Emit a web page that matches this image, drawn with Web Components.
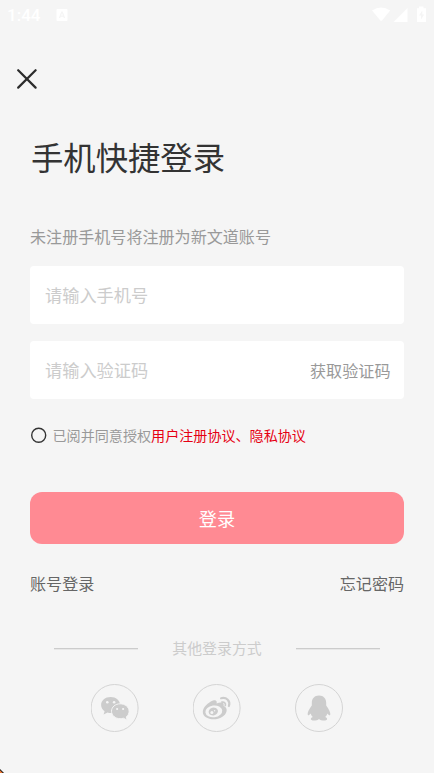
<!DOCTYPE html>
<html lang="zh-CN">
<head>
<meta charset="utf-8">
<title>手机快捷登录</title>
<style>
html,body{margin:0;height:100%;background:#f5f5f5;overflow:hidden}
body{font-family:"Noto Sans CJK SC",sans-serif;color:#333}
</style>
</head>
<body>
<login-page></login-page>
<script>
const define = (name, html) => {
  const t = document.createElement('template');
  t.innerHTML = html;
  customElements.define(name, class extends HTMLElement {
    constructor() {
      super();
      this.attachShadow({mode: 'open'}).append(t.content.cloneNode(true));
    }
  });
};

define('status-bar', `
<style>
:host{display:flex;height:30px;box-sizing:border-box;padding:0 6px 0 7px;align-items:center;color:#fff;font:500 17px/30px Roboto,sans-serif}
.t{width:49px;height:30px}
.s{flex:1}
svg{display:block;fill:#fff}
</style>
<span class="t">1:44</span>
<svg width="12" height="14" viewBox="0 0 12 14"><path fill-rule="evenodd" d="M1.500 1H10.500Q11.500 1 11.500 2V12Q11.500 13 10.500 13H1.500Q.5 13 .5 12V2Q.5 1 1.500 1ZM5.300 3.500 2.800 10H4.200L4.700 8.700H7.300L7.800 10H9.200L6.700 3.500ZM5.100 7.500 6 5 6.900 7.500Z"/></svg>
<span class="s"></span>
<svg width="56" height="18" viewBox="0 0 56 18"><path d="M0 4.400Q9 -1.400 18.200 4.400L10.300 14.200Q9.200 15.500 8.100 14.200ZM21.500 16 35.500 2V16Z"/><path fill-rule="evenodd" d="M47 .5H51.500V2.200H54V16H45V2.200H47ZM50.300 4.500 47 9.500H49V13.500L52.200 8.500H50.300Z"/></svg>`);

define('close-button', `
<style>:host{display:block;padding:39px 0 0 17px;height:60px;box-sizing:border-box}svg{display:block}</style>
<svg width="20" height="20" viewBox="0 0 20 20"><path d="M1.200 1.200 18.600 18.600M18.600 1.200 1.200 18.600" fill="none" stroke="#2c2c2c" stroke-width="2.200" stroke-linecap="round"/></svg>`);

define('text-field', `
<style>
:host{display:flex;justify-content:space-between;align-items:center;height:58px;box-sizing:border-box;padding:0 13.500px 0 15px;border-radius:4px;background:#fff;color:#ccc;font-size:17.200px;line-height:58px}
::slotted([slot=action]){font-size:16.100px;color:#999;line-height:58px;height:58px}
</style><span><slot></slot></span><slot name="action"></slot>`);

define('agree-line', `
<style>
:host{display:flex;align-items:center;height:20px;font-size:14.090px;line-height:20px;color:#999;white-space:nowrap}
i{box-sizing:border-box;width:16px;height:16px;margin:0 6px 0 .5px;flex:none}
svg{display:block}
::slotted(b){font-weight:400;color:#e60012}
</style><i><svg width="16" height="16" viewBox="0 0 16 16"><circle cx="7.700" cy="8.200" r="7" fill="none" stroke="#333" stroke-width="1.400"/></svg></i><span><slot></slot></span>`);

define('primary-button', `
<style>:host{display:block;height:52px;border-radius:12px;background:#ff8a93;color:#fff;text-align:center;font-size:18.200px;line-height:52px}</style><slot></slot>`);

define('link-row', `
<style>:host{display:flex;justify-content:space-between;height:24px;font-size:16.070px;line-height:24px;color:#666}</style><slot></slot>`);

define('line-divider', `
<style>
:host{display:flex;justify-content:space-between;align-items:center;height:24px;padding:0 24px;font-size:14.900px;line-height:24px;color:#ccc}
i{width:84px;height:1px;background:#ccc;box-shadow:0 1px #e8e8e8}
</style><i></i><span><slot></slot></span><i></i>`);

define('round-icon', `
<style>:host{display:block;width:48px;height:48px}::slotted(svg){display:block}</style><slot></slot>`);

define('login-page', `
<style>
:host{display:block;width:434px;height:773px;background:#f5f5f5;position:relative;overflow:hidden}
main{padding:0 30px;display:flex;flex-direction:column}
h1{margin:42px 0 0;padding-left:1px;font-weight:400;font-size:32.350px;line-height:48px;color:#333}
p{margin:44px 0 0;font-size:16.070px;line-height:24px;height:24px;color:#999}
text-field.a{margin-top:18px}
text-field.b{margin-top:17px}
agree-line{margin-top:26px}
primary-button{margin-top:47px}
link-row{margin-top:27px}
line-divider{margin-top:41px}
.socials{display:flex;gap:54px;padding:24px 0 0 61px}
.corner{position:absolute;left:0;bottom:0;display:block}
</style>
<status-bar></status-bar>
<close-button></close-button>
<main>
<h1>手机快捷登录</h1>
<p>未注册手机号将注册为新文道账号</p>
<text-field class="a">请输入手机号</text-field>
<text-field class="b">请输入验证码<span slot="action">获取验证码</span></text-field>
<agree-line>已阅并同意授权<b>用户注册协议、隐私协议</b></agree-line>
<primary-button>登录</primary-button>
<link-row><span>账号登录</span><span>忘记密码</span></link-row>
<line-divider>其他登录方式</line-divider>
<div class="socials">
<round-icon><svg width="48" height="48" viewBox="0.400 0 48 48"><circle cx="24" cy="24" r="23.500" fill="none" stroke="#d4d4d4"/><path fill="#ccc" d="M20 13C14.700 13 10.500 16.500 10.500 21C10.500 23.600 11.900 25.800 14 27.300L13 30.500L17 28.500Q18.500 29 20 29C25.300 29 29.500 25.500 29.500 21S25.300 13 20 13Z"/><path fill="#ccc" stroke="#f5f5f5" d="M29.500 19.800C24.800 19.800 20.900 23 20.900 27.200S24.800 34.700 29.500 34.700Q31.200 34.700 32.800 34.200L36.600 36.200L35.700 33C37.500 31.500 38.500 29.500 38.500 27.200C38.500 23 34.500 19.800 29.500 19.800Z"/><g fill="#f5f5f5"><circle cx="16.700" cy="18.200" r="1.300"/><circle cx="23.500" cy="18.200" r="1.300"/><circle cx="26.500" cy="25" r="1.100"/><circle cx="32.500" cy="25" r="1.100"/></g></svg></round-icon>
<round-icon><svg width="48" height="48" viewBox="0.400 0 48 48"><circle cx="24" cy="24" r="23.500" fill="none" stroke="#d4d4d4"/><path fill="#ccc" d="M20.500 16.500C23.300 15.500 24.700 16.800 24 19.500C28 17.800 32 18.200 31 22Q34.500 23.400 34 27C33.200 32 27 35.300 21 35.300C15 35.300 10.200 32.200 10.200 28C10.200 23.500 15.500 18.200 20.500 16.500Z"/><ellipse cx="21.200" cy="27.400" rx="8.500" ry="5.900" fill="#f5f5f5" transform="rotate(-8 21.200 27.400)"/><ellipse cx="20.700" cy="27.500" rx="4.700" ry="4" fill="#ccc" transform="rotate(-15 20.700 27.500)"/><circle cx="19.300" cy="28.400" r="1.500" fill="#f5f5f5"/><circle cx="22" cy="26.700" r=".7" fill="#f5f5f5"/><g fill="none" stroke="#ccc" stroke-linecap="round"><path stroke-width="2.200" d="M28.500 14.200C34 13 38 17 36.300 22"/><path stroke-width="1.700" d="M29.300 18.200C31.700 17.700 33.400 19.300 32.700 21.500"/></g></svg></round-icon>
<round-icon><svg width="48" height="48" viewBox="0 0 48 48"><circle cx="24" cy="24" r="23.500" fill="none" stroke="#d4d4d4"/><path fill="#ccc" d="M24 11.500C19.300 11.500 16.800 14.800 16.800 19V21.500C15.500 23.500 12.700 27 12.700 30C12.700 32 14 31.500 15.700 29.500C16 31 16.800 32 17.800 33C14.800 34.200 15.300 36.500 18.700 36.500C21 36.500 23 36 24 35C25 36 27 36.500 29.300 36.500C32.700 36.500 33.200 34.200 30.200 33C31.200 32 32 31 32.300 29.500C34 31.500 35.300 32 35.300 30C35.300 27 32.500 23.500 31.200 21.500V19C31.200 14.800 28.700 11.500 24 11.500Z"/></svg></round-icon>
</div>
</main>
<svg class="corner" width="4" height="4" viewBox="0 0 4 4"><path d="M0 0 4 4H0Z" fill="#111"/><path d="M0 1.300 2.700 4H0Z" fill="#f07a35"/></svg>`);
</script>
</body>
</html>
